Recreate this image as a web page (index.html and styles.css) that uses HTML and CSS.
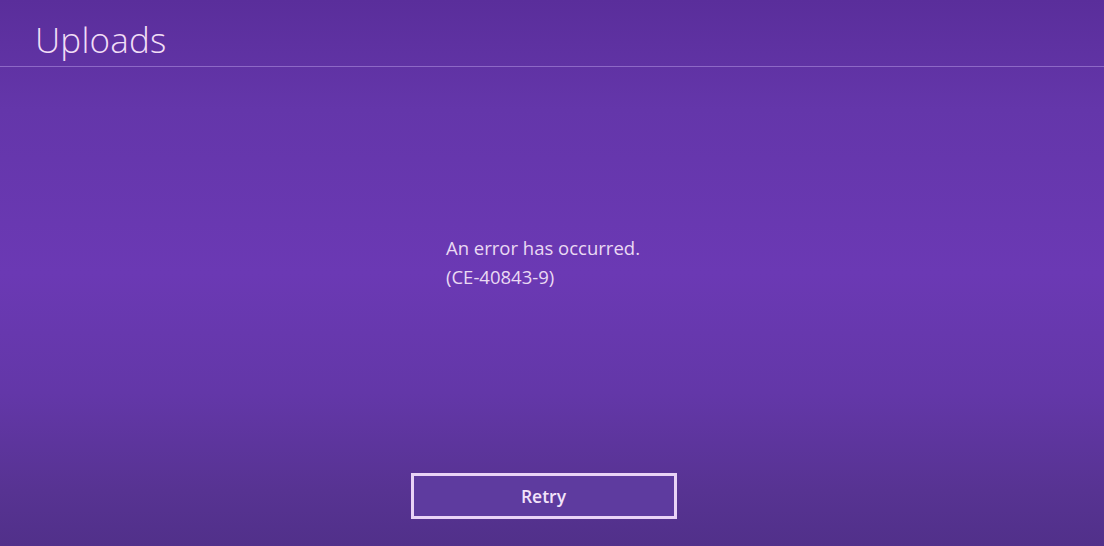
FILE: index.html
```html
<!DOCTYPE html>
<html lang="en">
<head>
<meta charset="utf-8">
<title>Uploads</title>
<link rel="stylesheet" href="styles.css">
</head>
<body>
<div class="screen">
  <header class="header">
    <h1 class="title">Uploads</h1>
  </header>
  <main class="content">
    <div class="message">
      <p>An error has occurred.</p>
      <p>(CE-40843-9)</p>
    </div>
    <button class="retry" type="button">Retry</button>
  </main>
</div>
</body>
</html>
```
FILE: styles.css
```css
html, body {
  margin: 0;
  padding: 0;
}
body {
  width: 1104px;
  height: 546px;
  overflow: hidden;
  font-family: "Open Sans", "Noto Sans", sans-serif;
}
.screen {
  height: 546px;
  display: flex;
  flex-direction: column;
  background: linear-gradient(180deg, #5a2e9b 0%, #6436aa 20%, #6b39b4 50%, #6337a8 72%, #573392 90%, #51308a 100%);
}
.header {
  height: 67px;
  box-sizing: border-box;
  border-bottom: 1px solid #8d68c6;
  display: flex;
  align-items: flex-end;
  padding-left: 35px;
}
.title {
  margin: 0 0 1px 0;
  font-weight: 300;
  font-size: 35px;
  line-height: 50px;
  color: #f1def6;
  letter-spacing: 0.2px;
}
.content {
  flex: 1;
  display: flex;
  flex-direction: column;
  align-items: center;
}
.message {
  margin-top: 166px;
  margin-left: -16px;
  width: 196px;
  color: #eadaf3;
  font-size: 18.5px;
  line-height: 29px;
  font-weight: 400;
}
.message p {
  margin: 0;
  white-space: nowrap;
}
.retry {
  margin-top: 182px;
  margin-left: -17px;
  width: 266px;
  height: 46px;
  box-sizing: border-box;
  border: 3px solid #e9d3f6;
  background: #5e3b9f;
  color: #f3e4fa;
  font-family: "Open Sans", "Noto Sans", sans-serif;
  font-weight: 600;
  font-size: 17.5px;
  padding: 0;
}
```
